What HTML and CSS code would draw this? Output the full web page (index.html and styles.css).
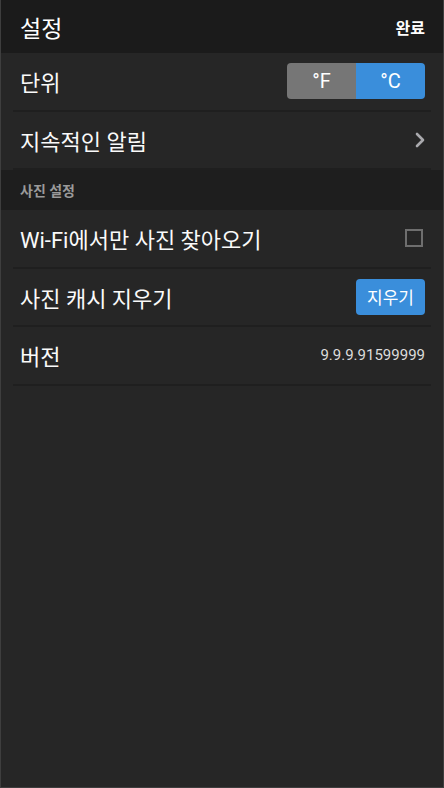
FILE: index.html
```html
<!DOCTYPE html>
<html lang="ko">
<head>
    <meta charset="UTF-8">
    <meta name="viewport" content="width=device-width, initial-scale=1.0">
    <title>설정</title>
    <link rel="stylesheet" href="styles.css">
</head>
<body>
    <div class="screen">
        <header class="top-bar">
            <h1 class="title">설정</h1>
            <button class="done-btn">완료</button>
        </header>

        <div class="list">
            <div class="row">
                <span class="label">단위</span>
                <div class="unit-toggle">
                    <button class="unit-btn">°F</button>
                    <button class="unit-btn active">°C</button>
                </div>
            </div>
            <div class="row">
                <span class="label">지속적인 알림</span>
                <svg class="chevron" width="12" height="16" viewBox="0 0 12 16">
                    <polyline points="3,2 9,8 3,14" fill="none" stroke="#a9a9ad" stroke-width="2.6" stroke-linecap="round" stroke-linejoin="round"/>
                </svg>
            </div>
        </div>

        <div class="section-title">사진 설정</div>

        <div class="list">
            <div class="row">
                <span class="label">Wi-Fi에서만 사진 찾아오기</span>
                <span class="checkbox"></span>
            </div>
            <div class="row">
                <span class="label">사진 캐시 지우기</span>
                <button class="clear-btn">지우기</button>
            </div>
            <div class="row">
                <span class="label">버전</span>
                <span class="version">9.9.9.91599999</span>
            </div>
        </div>
    </div>
</body>
</html>
```

FILE: styles.css
```css
html, body {
    margin: 0;
    padding: 0;
}

body {
    font-family: Roboto, "Noto Sans CJK KR", sans-serif;
    background-color: #262626;
    color: #fff;
}

.screen {
    box-sizing: border-box;
    width: 444px;
    height: 788px;
    border: 1px solid #3e3e3e;
    border-top: none;
    background-color: #262626;
}

/* Top bar */
.top-bar {
    height: 53px;
    display: flex;
    align-items: center;
    justify-content: space-between;
    padding: 0 18px 0 19px;
    background-color: #1b1b1b;
}

.title {
    margin: 0;
    font-size: 23px;
    font-weight: 400;
}

.done-btn {
    background: none;
    border: none;
    padding: 0;
    color: #fff;
    font-family: inherit;
    font-size: 16px;
    font-weight: 700;
}

/* Rows */
.list {
    padding: 0 12px;
}

.row {
    height: 56.5px;
    display: flex;
    align-items: center;
    justify-content: space-between;
    padding: 0 6px 0 7px;
    border-bottom: 2px solid #1f1f1f;
}

.label {
    font-size: 22px;
    color: #fafafa;
}

/* Unit toggle */
.unit-toggle {
    display: flex;
    width: 138px;
    height: 36px;
    border-radius: 4px;
    overflow: hidden;
}

.unit-btn {
    flex: 1;
    border: none;
    background-color: #767676;
    color: #fff;
    font-family: inherit;
    font-size: 20px;
}

.unit-btn.active {
    background-color: #3a8edb;
}

.chevron {
    margin-right: -1px;
}

/* Section header */
.section-title {
    height: 40px;
    display: flex;
    align-items: center;
    padding-left: 19px;
    background-color: #1e1e1e;
    color: #9a9a9a;
    font-size: 14px;
    font-weight: 700;
}

.checkbox {
    box-sizing: border-box;
    width: 18px;
    height: 18px;
    margin-right: 2px;
    border: 2px solid #6e6e6e;
}

.clear-btn {
    width: 69px;
    height: 36px;
    border: none;
    border-radius: 4px;
    background-color: #3a8edb;
    color: #fff;
    font-family: inherit;
    font-size: 17px;
}

.version {
    font-size: 15px;
    color: #dcdcdc;
}
```
